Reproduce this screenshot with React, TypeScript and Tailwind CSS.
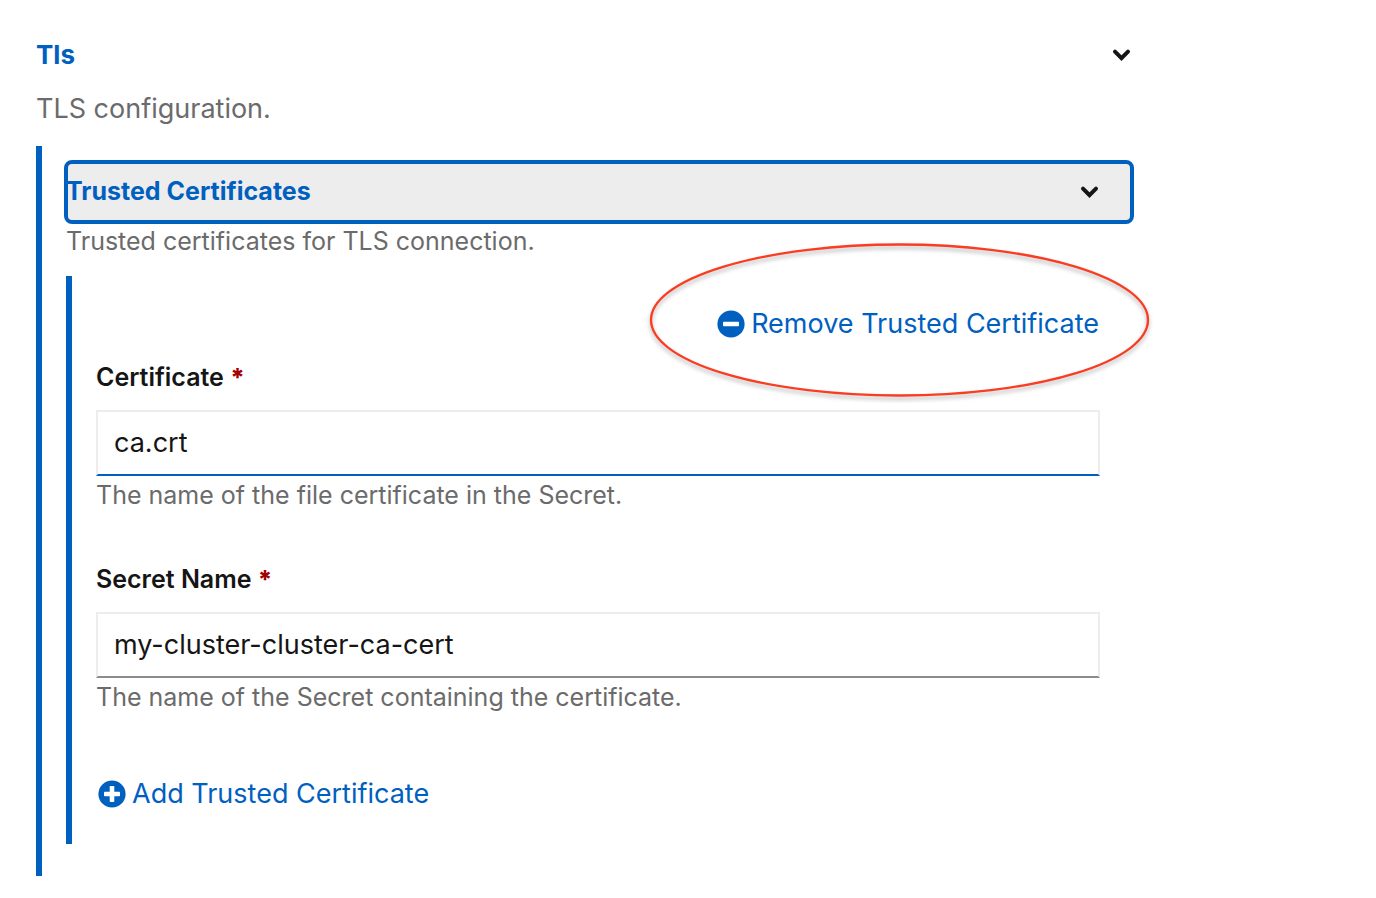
import { useState } from "react";
import type { ReactNode } from "react";

function Chevron() {
  return (
    <svg aria-hidden="true" className="h-[14px] w-5 shrink-0" viewBox="0 0 20 14" fill="none">
      <path
        d="M3 3.6l6.5 6.5L16 3.6"
        stroke="#151515"
        strokeWidth="4"
        strokeLinecap="round"
        strokeLinejoin="miter"
      />
    </svg>
  );
}

function CircleIcon({ plus = false }: { plus?: boolean }) {
  return (
    <svg aria-hidden="true" className="h-7 w-7 shrink-0" viewBox="0 0 28 28">
      <circle cx="14" cy="14" r="13.6" fill="#0060c0" />
      <rect x="6" y="11.7" width="16" height="4.6" rx="0.8" fill="#fff" />
      {plus && <rect x="11.7" y="6" width="4.6" height="16" rx="0.8" fill="#fff" />}
    </svg>
  );
}

function Field({
  id,
  label,
  help,
  initial,
  active = false,
}: {
  id: string;
  label: string;
  help: string;
  initial: string;
  active?: boolean;
}) {
  const [value, setValue] = useState(initial);
  return (
    <div className="flex flex-col">
      <label htmlFor={id} className="mb-[14px] text-[25px] leading-[38px] font-semibold text-[#151515]">
        {label} <span className="font-extrabold text-[#a30000]">*</span>
      </label>
      <input
        id={id}
        type="text"
        required
        value={value}
        onChange={(e) => setValue(e.target.value)}
        aria-describedby={`${id}-help`}
        className={
          "h-[66px] w-full border-2 border-[#ededed] bg-white px-4 pb-0.5 text-[27px] text-[#151515] outline-none " +
          (active ? "border-b-[#0060c0]" : "border-b-[#8a8d90]")
        }
      />
      <p id={`${id}-help`} className="text-[25px] leading-[38px] text-[#6b6b6b]">
        {help}
      </p>
    </div>
  );
}

function LinkButton({ children, className }: { children: ReactNode; className: string }) {
  return (
    <button
      type="button"
      className={"flex items-center gap-1.5 text-[27px] leading-[42px] text-[#0060c0] " + className}
    >
      {children}
    </button>
  );
}

export default function App() {
  return (
    <main className="min-h-screen bg-white pt-[34px] pr-6 pl-9 font-['Inter','Liberation_Sans',sans-serif]">
      <section className="max-w-[1096px]">
        <button
          type="button"
          aria-expanded="true"
          className="flex w-full items-center justify-between text-left text-[26px] leading-[42px] font-bold text-[#0060c0]"
        >
          <span>Tls</span>
          <Chevron />
        </button>
        <p className="mt-3 text-[27px] leading-[42px] text-[#6b6b6b]">TLS configuration.</p>

        <div className="mt-4 border-l-6 border-[#0060c0] pt-4 pb-8 pl-6">
          <button
            type="button"
            aria-expanded="true"
            className="flex h-[60px] w-full items-center justify-between rounded-md bg-[#ededed] pr-8 text-left text-[25px] font-bold text-[#0060c0] outline-4 -outline-offset-2 outline-[#0060c0]"
          >
            <span>Trusted Certificates</span>
            <Chevron />
          </button>
          <p className="text-[25px] leading-[38px] text-[#6b6b6b]">
            Trusted certificates for TLS connection.
          </p>

          <div className="mt-4 flex flex-col border-l-6 border-[#0060c0] pt-[27px] pr-8 pb-[29px] pl-6">
            <div className="relative mb-[13px] self-end">
              <LinkButton className="pr-px">
                <CircleIcon />
                Remove Trusted Certificate
              </LinkButton>
              <svg
                aria-hidden="true"
                className="pointer-events-none absolute -top-16 -right-[54px] h-[164px] w-[510px]"
                viewBox="0 0 510 164"
                fill="none"
              >
                <g style={{ filter: "drop-shadow(0 3px 2px rgba(0,0,0,0.3))" }}>
                  <ellipse cx="255.5" cy="81" rx="248.5" ry="75.5" stroke="#fa3c22" strokeWidth="2.3" />
                </g>
              </svg>
            </div>

            <div className="flex flex-col gap-[46px]">
              <Field
                id="certificate"
                label="Certificate"
                help="The name of the file certificate in the Secret."
                initial="ca.crt"
                active
              />
              <Field
                id="secret-name"
                label="Secret Name"
                help="The name of the Secret containing the certificate."
                initial="my-cluster-cluster-ca-cert"
              />
            </div>

            <LinkButton className="mt-[57px] ml-0.5 self-start">
              <CircleIcon plus />
              Add Trusted Certificate
            </LinkButton>
          </div>
        </div>
      </section>
    </main>
  );
}
